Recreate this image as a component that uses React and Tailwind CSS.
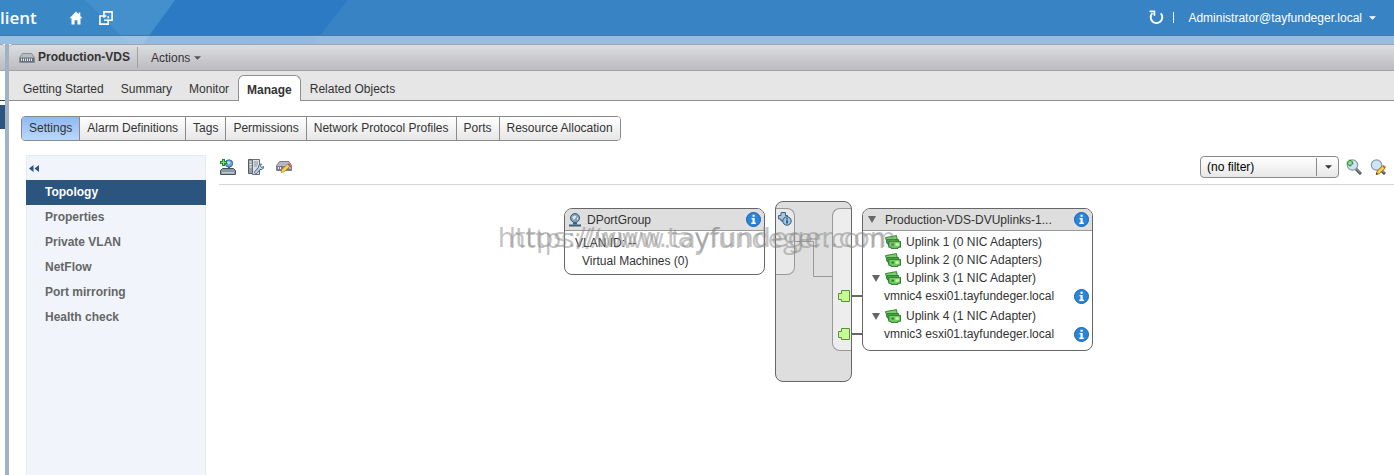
import { useState } from 'react';

const TABS = ['Getting Started', 'Summary', 'Monitor', 'Manage', 'Related Objects'];
const SECTIONS = ['Settings', 'Alarm Definitions', 'Tags', 'Permissions', 'Network Protocol Profiles', 'Ports', 'Resource Allocation'];
const SETTINGS = ['Topology', 'Properties', 'Private VLAN', 'NetFlow', 'Port mirroring', 'Health check'];

// Icons
const HomeIcon = () => (
    <svg className="w-[14px] h-[14px]" viewBox="0 0 14 14" fill="#fff">
        <path d="M7 0.5L0.5 7.3H2.5V13.5H5.6V9.3H8.4V13.5H11.5V7.3H13.5L11.3 5V1.5H9.6V3.2Z" />
    </svg>
);

const WindowsIcon = () => (
    <svg className="w-[14px] h-[14px]" viewBox="0 0 14 14" fill="none" stroke="#fff" strokeWidth="1.6">
        <path d="M5 9.2H13.1V0.9H5V5" />
        <path d="M4.8 5H0.9V13.1H9.2V9.2" />
        <path d="M5 7V5H7.4M9.2 5V7.4" strokeWidth="1.3" />
    </svg>
);

const RefreshIcon = () => (
    <svg className="w-[15px] h-[15px]" viewBox="0 0 15 15" fill="none" stroke="#fff" strokeWidth="1.9">
        <path d="M3.4 3.2A5.8 5.8 0 1 0 11.8 3.4" />
        <path d="M0.6 1.3H5.4V5.8" strokeWidth="1.8" />
    </svg>
);

const CaretDown = ({ className }) => (
    <svg className={className} viewBox="0 0 8 4" fill="currentColor"><path d="M0 0H8L4 4Z" /></svg>
);

const SwitchIcon = () => (
    <svg className="w-4 h-[10px]" viewBox="0 0 16 10">
        <path d="M3.5 0.5H12.5L15.5 4.5V9.5H0.5V4.5Z" fill="#b4bbc1" stroke="#858c93" />
        <path d="M1 4.5H15V9H1Z" fill="#66717b" />
        <path d="M2.5 5.5V8M4.5 5.5V8M6.5 5.5V8M8.5 5.5V8M10.5 5.5V8M12.5 5.5V8" stroke="#e3e8ec" />
    </svg>
);

const AddHostIcon = () => (
    <svg className="w-4 h-4" viewBox="0 0 16 16">
        <circle cx="9" cy="4.5" r="3.7" fill="#6ea3da" stroke="#376ba6" />
        <path d="M7 3L9 2L10.5 4L8.5 5.5Z" fill="#c6def3" />
        <path d="M8 8H10V10H8Z" fill="#4a5a68" />
        <path d="M2.5 9.5H13.5L15.5 11.5V15.5H0.5V11.5Z" fill="#8b98a4" stroke="#46525d" />
        <path d="M3 13V14.5M5 13V14.5M7 13V14.5M9 13V14.5M11 13V14.5M13 13V14.5" stroke="#f2f5f7" />
        <path d="M3.5 0V7M0 3.5H7" stroke="#1d8f28" strokeWidth="3" />
        <path d="M3.5 1V6M1 3.5H6" stroke="#7fe070" />
    </svg>
);

const HostToolsIcon = () => (
    <svg className="w-4 h-4" viewBox="0 0 16 16">
        <path d="M0.5 0.5H4.5V14.5H0.5Z" fill="#9aa1a8" stroke="#555b61" />
        <path d="M4.5 0.5H11.5V15.5H4.5Z" fill="#dde1e5" stroke="#666d74" />
        <path d="M1.5 3H3.5M1.5 5.5H3.5M1.5 8H3.5" stroke="#fff" />
        <path d="M6 3H10M6 5H10M6 7H9" stroke="#89929a" />
        <path d="M7 14.5L12 8.5" stroke="#44627c" strokeWidth="3.4" />
        <path d="M10.5 8.5C10 6.5 11.5 5 13.5 5L12.5 7L13.5 8.5L15.5 7.5C16 9.7 14 11 12 10.5Z" fill="#bdd7ea" stroke="#44627c" strokeWidth="0.9" />
        <path d="M7.3 14.2L12 8.7" stroke="#bdd7ea" strokeWidth="1.8" />
    </svg>
);

const EditSwitchIcon = () => (
    <svg className="w-4 h-3" viewBox="0 0 16 12">
        <path d="M3.5 0.5H13L15.5 4.5V9.5H0.5V4.5Z" fill="#b6b4c5" stroke="#807e8d" />
        <path d="M1 5H15V9H1Z" fill="#7b7a8b" />
        <path d="M2.5 6V8M4.5 6V8M14 6V8" stroke="#eceaf2" />
        <path d="M5 11.5L5.8 8.5L11.5 3.2L13.8 5.4L8 10.8Z" fill="#f9d34a" stroke="#a77f1c" strokeWidth="0.7" />
        <path d="M11.5 3.2L13.8 5.4L15 4.2L12.7 2Z" fill="#d8574d" />
    </svg>
);

const Magnifier = () => (
    <>
        <path d="M9.5 9.5L15 15" stroke="#4d5358" strokeWidth="3" />
        <path d="M10.5 10L14.5 14" stroke="#a9b0b5" />
        <circle cx="6.5" cy="6" r="5.2" fill="#cde4f6" stroke="#8b9aa7" strokeWidth="1.2" />
    </>
);

const AddFilterIcon = () => (
    <svg className="w-4 h-4" viewBox="0 0 16 16">
        <Magnifier />
        <path d="M4 0.8V7.2M0.8 4H7.2" stroke="#2f9838" strokeWidth="2.8" />
        <path d="M4 2V6M2 4H6" stroke="#c8f2c2" />
    </svg>
);

const EditFilterIcon = () => (
    <svg className="w-4 h-4" viewBox="0 0 16 16">
        <Magnifier />
        <path d="M6.2 15.5L7 12.3L12.5 7L15 9.4L9.4 14.7Z" fill="#f7cf45" stroke="#8f6b10" strokeWidth="0.9" />
        <path d="M12.5 7L15 9.4L16 8.2L13.7 6Z" fill="#d45a4a" />
        <path d="M6.2 15.5L6.6 13.8L8 15Z" fill="#222" />
    </svg>
);

const InfoIcon = () => (
    <svg className="w-[15px] h-[15px] shrink-0" viewBox="0 0 15 15">
        <circle cx="7.5" cy="7.5" r="7" fill="#2b84d6" stroke="#1664b2" />
        <path d="M6.5 2.8H8.7V4.7H6.5ZM5.5 6H8.7V10.6H9.8V12H5.3V10.6H6.5V7.3H5.5Z" fill="#fff" />
    </svg>
);

const PortGroupIcon = () => (
    <svg className="w-[14px] h-[14px] shrink-0" viewBox="0 0 14 14">
        <circle cx="7" cy="5" r="4.5" fill="#7fa3bb" stroke="#3c5d76" />
        <path d="M4 4L7 2.5L8.5 3.5L7 5.5L6 7Z" fill="#dfeaf1" />
        <path d="M9 4.5L10.5 5L9 7.5Z" fill="#dfeaf1" />
        <path d="M5 9.5H9V11.5H5Z" fill="#3c5d76" />
        <path d="M1 12.5H13" stroke="#3c5d76" strokeWidth="2" />
    </svg>
);

const NicIcon = () => (
    <svg className="w-4 h-[14px] shrink-0" viewBox="0 0 16 14" strokeWidth="0.9">
        <path d="M0.5 2.6L11.5 0.6L12.3 5L2 8Z" fill="#7ed06a" stroke="#2b7d30" />
        <path d="M2 4.5H13.5V10.5H3.2V8.5H2Z" fill="#4fae47" stroke="#2b7d30" />
        <path d="M3.8 6.3H15.5V12.3H13V13.4H6V12.3H3.8Z" fill="#6fce5d" stroke="#226f29" />
        <path d="M6.5 8.7H9V10.5H6.5Z" fill="#2b7d30" />
        <path d="M10.5 8.3H13.8V10.7H10.5Z" fill="#d9f5bb" />
    </svg>
);

const LinkedInfoIcon = () => (
    <svg className="w-[14px] h-[14px]" viewBox="0 0 14 14">
        <path d="M0.6 3.5H3V0.6H7.5V3.5H9.5V7H7V9H3V7H0.6Z" fill="#a9c6de" stroke="#38607f" />
        <circle cx="9" cy="9" r="4.2" fill="#9cc3e4" stroke="#2c587c" />
        <path d="M9 6.2V7.4M9 8.2V11.5" stroke="#1d4566" strokeWidth="1.5" />
    </svg>
);

const Twisty = () => (
    <svg className="w-2 h-[7px]" viewBox="0 0 8 7" fill="#666"><path d="M0 0H8L4 7Z" /></svg>
);

const TopBar = () => (
    <header className="relative flex h-[35px] items-center text-white">
        <span className="w-[69px] font-['Open_Sans'] text-[17px] font-semibold leading-6">lient</span>
        <button aria-label="Home" className="mr-4"><HomeIcon /></button>
        <button aria-label="Open windows"><WindowsIcon /></button>
        <div className="ml-auto flex items-center pr-[18px] text-xs">
            <button aria-label="Refresh"><RefreshIcon /></button>
            <span className="ml-[9px] mr-[14px] h-[11px] w-px bg-white" />
            <button className="flex items-center gap-[7px]">
                Administrator@tayfundeger.local
                <CaretDown className="w-[7px] h-1" />
            </button>
        </div>
    </header>
);

// Angled facets behind the top bar
const Backdrop = () => (
    <div className="absolute inset-x-0 top-0 h-11 bg-[#3883c3]">
        <svg className="h-11 w-[350px]" viewBox="0 0 350 44">
            <path d="M0 0H348L313 44H0Z" fill="#2b7ac3" />
            <path d="M0 0H175L143 44H0Z" fill="#3a87c6" />
            <path d="M85 0H175L143 44H130Z" fill="#4490cc" />
        </svg>
        <div className="absolute inset-x-0 bottom-0 h-[9px] border-t border-[#4779a5] bg-[#d5e5f3]/60" />
    </div>
);

const UplinkRow = ({ name, count, open }) => (
    <div className="flex h-[18px] items-center">
        <span className="flex w-[13px] shrink-0">{open && <Twisty />}</span>
        <NicIcon />
        <span className="ml-[5px]">{name} ({count})</span>
    </div>
);

const NicRow = ({ name }) => (
    <div className="flex h-[18px] items-center justify-between pl-3">
        <span>{name}</span>
        <InfoIcon />
    </div>
);

const Topology = () => (
    <div className="relative flex items-start pl-[345px] pt-4">
        {/* Port group */}
        <section className="mt-[7px] w-[201px] rounded-lg border border-[#666] bg-white">
            <h2 className="flex h-[22px] items-center rounded-t-[7px] border-b border-[#999] bg-[#dedede] pl-[3px] pr-[3px]">
                <PortGroupIcon />
                <span className="ml-[5px] flex-1">DPortGroup</span>
                <InfoIcon />
            </h2>
            <div className="pb-1 pl-[10px] pt-[3px] leading-[18px]">
                <p>VLAN ID: --</p>
                <p className="pl-[7px]">Virtual Machines (0)</p>
            </div>
        </section>

        {/* Switch body */}
        <section className="ml-[10px] flex h-[181px] w-[77px] items-start justify-between rounded-lg border border-[#666] bg-[#dedede] pt-[6px]">
            <div className="flex h-[67px] w-[19px] justify-center rounded-r-lg border border-l-0 border-[#999] bg-[#e9e9e9] pt-[3px]">
                <LinkedInfoIcon />
            </div>
            <svg className="h-[143px] w-[37px]" viewBox="0 0 37 143" fill="none" stroke="#999">
                <path d="M0 33.5H18.5V68.5H37" />
            </svg>
            <div className="flex h-[143px] w-[19px] flex-col items-end gap-[26px] rounded-l-lg border border-r-0 border-[#999] bg-[#ededed] pt-[81px]">
                {[4, 3].map(nic => (
                    <svg key={nic} className="h-3 w-[13px] shrink-0" viewBox="0 0 13 12">
                        <path d="M3.5 0.5H11.5V11.5H3.5V9.5H0.5V3.5H3.5Z" fill="#c6fb91" stroke="#5b8f3c" />
                    </svg>
                ))}
            </div>
        </section>

        {/* Cables */}
        <div className="flex w-[10px] flex-col gap-9 pt-[94px]">
            <div className="h-[2px] bg-[#666]" />
            <div className="h-[2px] bg-[#666]" />
        </div>

        {/* Uplinks */}
        <section className="mt-[7px] w-[231px] rounded-lg border border-[#666] bg-white">
            <h2 className="flex h-[22px] items-center rounded-t-[7px] border-b border-[#999] bg-[#dedede] pl-[5px] pr-[3px]">
                <Twisty />
                <span className="ml-[9px] flex-1">Production-VDS-DVUplinks-1...</span>
                <InfoIcon />
            </h2>
            <div className="flex flex-col gap-[2px] pb-[7px] pl-[9px] pr-[3px] pt-[2px]">
                <div>
                    <UplinkRow name="Uplink 1" count="0 NIC Adapters" />
                    <UplinkRow name="Uplink 2" count="0 NIC Adapters" />
                    <UplinkRow name="Uplink 3" count="1 NIC Adapter" open />
                    <NicRow name="vmnic4 esxi01.tayfundeger.local" />
                </div>
                <div>
                    <UplinkRow name="Uplink 4" count="1 NIC Adapter" open />
                    <NicRow name="vmnic3 esxi01.tayfundeger.local" />
                </div>
            </div>
        </section>
    </div>
);

const Watermark = () => (
    <div className="pointer-events-none absolute inset-x-0 top-[222px] grid place-items-center text-[#888]/50">
        <span className="col-start-1 row-start-1 font-['DejaVu_Sans'] text-[27px] leading-8">https://www.tayfundeger.com</span>
        <span className="col-start-1 row-start-1 font-['Open_Sans'] text-[27px] leading-8">https://www.tayfundeger.com</span>
    </div>
);

const App = () => {
    const [tab, setTab] = useState('Manage');
    const [section, setSection] = useState('Settings');
    const [setting, setSetting] = useState('Topology');

    return (
        <div className="relative flex min-h-screen flex-col overflow-hidden bg-white font-['Liberation_Sans',sans-serif] text-xs text-[#333]">
            <Backdrop />
            <TopBar />

            <div className="relative mt-[9px] flex flex-1">
                {/* Edge of the navigator panel */}
                <aside className="w-[5px] shrink-0">
                    <div className="h-[27px] rounded-tr border-y border-[#a3a3a6] bg-linear-to-b from-[#dcdde0] to-[#bcbcc0]" />
                    <div className="h-[30px] border-b border-[#444] bg-white" />
                    <div className="h-1 bg-white" />
                    <div className="h-6 bg-[#2b547e]" />
                </aside>
                <div className="w-1 shrink-0 bg-[#a0b2c3]" />

                <main className="flex min-w-0 flex-1 flex-col bg-white">
                    <div className="flex h-[27px] items-center rounded-tl border-y border-[#a3a3a6] bg-linear-to-b from-[#dcdde0] to-[#bcbcc0] pl-[10px]">
                        <SwitchIcon />
                        <h1 className="ml-[3px] border-r border-[#a0a0a4] pr-[7px] font-bold leading-[21px]">Production-VDS</h1>
                        <button className="ml-[13px] flex items-center gap-1">
                            Actions
                            <CaretDown className="w-[7px] h-1 text-[#555]" />
                        </button>
                    </div>

                    <nav className="flex h-[30px] items-end gap-px border-b border-[#8f8f8f] bg-[#e6e6e6] pl-[6px]">
                        {TABS.map(name => (
                            <button
                                key={name}
                                onClick={() => setTab(name)}
                                className={tab === name
                                    ? 'relative -mb-px h-[26px] rounded-t-md border border-b-0 border-[#8f8f8f] bg-white px-2 pt-[2px] font-bold'
                                    : 'h-[25px] px-2 pt-[2px]'}
                            >
                                {name}
                            </button>
                        ))}
                    </nav>

                    <div className="flex pl-3 pt-[15px]">
                        <div className="flex h-[25px] overflow-hidden rounded border border-[#8a8a8a]">
                            {SECTIONS.map(name => (
                                <button
                                    key={name}
                                    onClick={() => setSection(name)}
                                    className={`border-r border-[#8a8a8a] px-[7px] pb-[2px] last:border-r-0 ${section === name
                                        ? 'bg-linear-to-b from-[#8fb8f3] to-[#b9d8fb]'
                                        : 'bg-linear-to-b from-white to-[#e6e6e6]'
                                        }`}
                                >
                                    {name}
                                </button>
                            ))}
                        </div>
                    </div>

                    <div className="flex flex-1 pl-[17px] pt-[14px]">
                        <aside className="w-[180px] shrink-0 border border-b-0 border-[#e4ebf4] bg-[#f1f5fb]">
                            <div className="flex h-6 items-center pl-[2px]">
                                <button aria-label="Collapse">
                                    <svg className="h-[7px] w-[10px]" viewBox="0 0 10 7" fill="#2b547e"><path d="M4.5 0V7L0 3.5ZM10 0V7L5.5 3.5Z" /></svg>
                                </button>
                            </div>
                            <ul className="-mx-px">
                                {SETTINGS.map(name => (
                                    <li key={name}>
                                        <button
                                            onClick={() => setSetting(name)}
                                            className={`block h-[25px] w-full pb-[2px] pl-[19px] text-left font-bold ${setting === name ? 'bg-[#2b547e] text-white' : 'text-[#666]'}`}
                                        >
                                            {name}
                                        </button>
                                    </li>
                                ))}
                            </ul>
                        </aside>

                        <div className="ml-[13px] min-w-0 flex-1">
                            <div className="flex h-[30px] items-center border-b border-[#d6d6d6] pb-[6px] pr-2">
                                <div className="flex items-center gap-3 pl-px">
                                    <button aria-label="Add hosts"><AddHostIcon /></button>
                                    <button aria-label="Manage hosts"><HostToolsIcon /></button>
                                    <button aria-label="Edit switch"><EditSwitchIcon /></button>
                                </div>
                                <div className="relative ml-auto mr-[7px]">
                                    <select
                                        aria-label="Filter"
                                        className="block h-[22px] w-[139px] appearance-none rounded border border-[#8a8a8a] bg-linear-to-b from-white to-[#e8e8e8] pl-[6px] text-xs text-black"
                                    >
                                        <option>(no filter)</option>
                                    </select>
                                    <span className="pointer-events-none absolute inset-y-[2px] right-0 flex w-[23px] items-center justify-center border-l border-[#8a8a8a]">
                                        <CaretDown className="h-1 w-[7px]" />
                                    </span>
                                </div>
                                <button aria-label="Add filter" className="mr-2"><AddFilterIcon /></button>
                                <button aria-label="Edit filter"><EditFilterIcon /></button>
                            </div>

                            <Topology />
                        </div>
                    </div>
                </main>
            </div>

            <Watermark />
        </div>
    );
};

export default App;
